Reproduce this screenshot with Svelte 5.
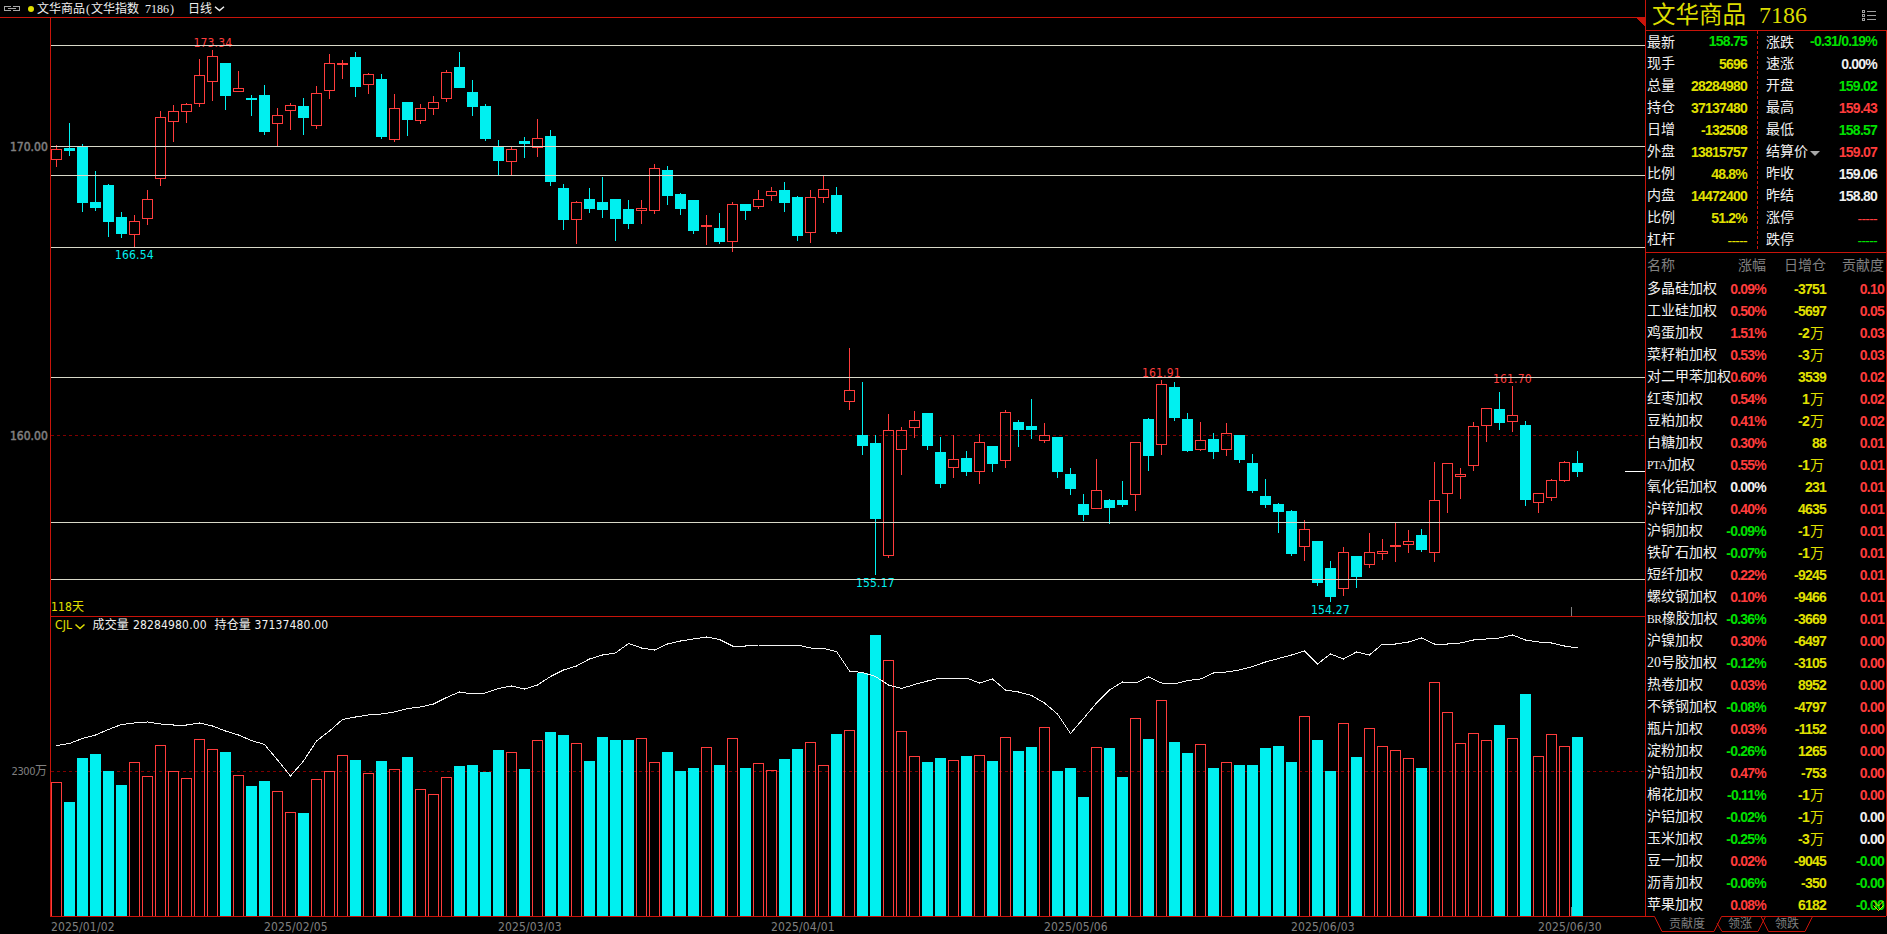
<script>
  const STEP = 13;
  const BAR = 11;
  const LEFT = 51;
  const BASE = 916;

  // direction, high, body top, body bottom, low, volume top, open interest
  const rows = `
    u 145 149 160 167 782 745.5|d 123 148 151 156 802 743.5|d 144 146 203 212 758 738.5|d 171 202 208 211 754 735
    d 184 185 222 237 771 729.5|d 212 217 234 238 785 724.5|u 215 221 235 247 762 723|u 190 199 219 225 776 722
    u 111 117 179 186 745 724|u 105 111 122 142 771 725|u 103 104 112 123 778 725|u 59 75 104 107 739 723
    u 50 56 82 101 749 726|d 63 63 96 110 752 731|u 71 88 92 92 775 735|d 95 98 100 116 786 740.5
    d 85 95 132 135 781 744.5|u 108 115 124 146 791 760|u 103 105 111 130 812 776|d 98 106 118 135 813 761
    u 86 93 126 129 779 741|u 54 63 91 99 771 731|u 60 63 65 79 755 719.5|d 52 57 87 97 760 717
    u 73 74 85 94 773 715|d 74 79 137 139 761 714|u 94 108 140 142 769 712|d 102 102 120 136 757 708.5
    u 104 108 121 124 789 707|u 96 102 109 115 794 704|u 70 72 99 102 777 697.5|d 52 67 88 88 766 692
    d 80 92 107 116 765 694|d 104 106 139 141 772 693|d 140 146 161 175 750 688.5|u 147 149 162 175 752 686
    d 137 141 144 158 769 689|u 119 138 148 157 740 685|d 130 136 182 186 732 676.5|d 184 188 220 230 735 670
    u 201 202 220 244 743 666|d 188 199 209 213 761 659|d 177 202 210 218 737 655|d 199 199 219 241 740 653
    d 200 209 224 229 740 643.5|u 200 208 211 224 738 648|u 164 168 211 214 762 650|d 166 170 196 205 752 644
    d 193 194 209 215 771 641|d 200 200 231 234 768 639|u 215 225 227 245 747 637|d 213 228 242 244 765 639.5
    u 202 204 242 252 738 646|d 204 204 211 220 768 646|u 190 199 207 209 763 645|u 187 191 196 201 770 645
    d 182 190 203 212 759 645|d 196 197 236 241 749 645|u 190 197 233 243 742 648|u 176 189 198 203 765 648.5
    d 187 195 232 234 734 651.5|u 348 390 402 410 730 671|d 382 435 446 455 673 672.5|d 435 443 519 575 635 676.5
    u 414 430 556 558 660 685|u 427 430 450 475 731 688.5|u 411 420 428 438 756 684.5|d 413 413 446 450 762 681
    d 437 452 484 488 758 678|u 435 459 468 478 760 678|d 451 458 472 476 756 678|u 434 442 472 484 755 683
    d 446 446 464 472 761 679|u 410 412 461 468 737 690|d 420 422 430 447 751 692|d 399 426 430 439 747 695.5
    u 423 435 441 443 727 703|d 437 437 472 478 771 714|d 468 474 489 495 768 733.5|d 494 504 515 521 797 718.5
    u 459 490 509 509 747 703|d 499 500 508 524 748 690|d 481 500 505 507 777 682|u 442 442 495 511 718 683
    d 418 419 456 471 739 677|u 380 384 445 455 700 683|d 382 387 418 421 742 684|d 413 419 451 452 753 680.5
    u 422 440 450 451 744 679|d 433 439 452 459 768 673|u 423 433 450 456 762 672|d 435 435 460 463 765 670
    d 454 463 491 493 765 666.5|d 479 496 505 508 748 662|d 503 504 512 533 746 658.5|d 510 511 554 556 762 655
    u 520 529 547 561 716 651|d 541 541 583 586 740 664|d 561 568 597 602 771 654|u 547 552 589 596 723 659
    d 556 556 577 588 757 652|u 533 552 565 568 728 655|u 539 551 554 560 746 644|u 523 545 547 562 750 644
    u 530 541 545 553 758 642|d 529 535 550 552 768 638|u 462 500 553 562 682 644|u 463 463 494 513 712 644
    u 468 474 477 499 743 643|u 422 426 466 471 733 640|u 408 408 426 442 740 639|d 392 409 423 430 725 638
    u 386 415 422 432 738 635|d 421 425 500 506 694 640|u 493 493 503 513 756 642|u 479 480 498 501 734 643
    u 461 462 481 482 746 646|d 451 463 472 477 737 648`;

  const bars = rows
    .trim()
    .split(/[|\n]/)
    .map((row, i) => {
      const [dir, ...nums] = row.trim().split(' ');
      const [high, top, bottom, low, vol, oi] = nums.map(Number);
      return { dir, high, top, bottom, low, vol, oi, x: LEFT + i * STEP };
    });

  const interest = bars.map((b) => `${b.x + 5.5},${b.oi}`).join(' ');

  const levels = [45, 146, 175, 247, 377, 522, 579];

  const marks = [
    { x: 193.5, y: 47, text: '173.34', cls: 'up' },
    { x: 115, y: 259, text: '166.54', cls: 'down' },
    { x: 1142, y: 377, text: '161.91', cls: 'up' },
    { x: 856, y: 587, text: '155.17', cls: 'down' },
    { x: 1493, y: 383, text: '161.70', cls: 'up' },
    { x: 1311, y: 614, text: '154.27', cls: 'down' }
  ];

  const dates = [
    [51, '2025/01/02'],
    [264, '2025/02/05'],
    [498, '2025/03/03'],
    [771, '2025/04/01'],
    [1044, '2025/05/06'],
    [1291, '2025/06/03'],
    [1538, '2025/06/30']
  ];

  const quote = [
    ['最新', '158.75', 'green', '涨跌', '-0.31/0.19%', 'green'],
    ['现手', '5696', 'yellow', '速涨', '0.00%', 'white'],
    ['总量', '28284980', 'yellow', '开盘', '159.02', 'green'],
    ['持仓', '37137480', 'yellow', '最高', '159.43', 'red'],
    ['日增', '-132508', 'yellow', '最低', '158.57', 'green'],
    ['外盘', '13815757', 'yellow', '结算价', '159.07', 'red'],
    ['比例', '48.8%', 'yellow', '昨收', '159.06', 'white'],
    ['内盘', '14472400', 'yellow', '昨结', '158.80', 'white'],
    ['比例', '51.2%', 'yellow', '涨停', '-----', 'red'],
    ['杠杆', '-----', 'yellow', '跌停', '-----', 'green']
  ];

  const contracts = [
    ['多晶硅加权', '0.09%', '-3751', '0.10'],
    ['工业硅加权', '0.50%', '-5697', '0.05'],
    ['鸡蛋加权', '1.51%', '-2万', '0.03'],
    ['菜籽粕加权', '0.53%', '-3万', '0.03'],
    ['对二甲苯加权', '0.60%', '3539', '0.02'],
    ['红枣加权', '0.54%', '1万', '0.02'],
    ['豆粕加权', '0.41%', '-2万', '0.02'],
    ['白糖加权', '0.30%', '88', '0.01'],
    ['PTA加权', '0.55%', '-1万', '0.01'],
    ['氧化铝加权', '0.00%', '231', '0.01'],
    ['沪锌加权', '0.40%', '4635', '0.01'],
    ['沪铜加权', '-0.09%', '-1万', '0.01'],
    ['铁矿石加权', '-0.07%', '-1万', '0.01'],
    ['短纤加权', '0.22%', '-9245', '0.01'],
    ['螺纹钢加权', '0.10%', '-9466', '0.01'],
    ['BR橡胶加权', '-0.36%', '-3669', '0.01'],
    ['沪镍加权', '0.30%', '-6497', '0.00'],
    ['20号胶加权', '-0.12%', '-3105', '0.00'],
    ['热卷加权', '0.03%', '8952', '0.00'],
    ['不锈钢加权', '-0.08%', '-4797', '0.00'],
    ['瓶片加权', '0.03%', '-1152', '0.00'],
    ['淀粉加权', '-0.26%', '1265', '0.00'],
    ['沪铅加权', '0.47%', '-753', '0.00'],
    ['棉花加权', '-0.11%', '-1万', '0.00'],
    ['沪铝加权', '-0.02%', '-1万', '0.00', 'white'],
    ['玉米加权', '-0.25%', '-3万', '0.00', 'white'],
    ['豆一加权', '0.02%', '-9045', '-0.00'],
    ['沥青加权', '-0.06%', '-350', '-0.00'],
    ['苹果加权', '0.08%', '6182', '-0.00']
  ];

  function tone(value) {
    if (value.startsWith('-')) return 'green';
    return value === '0.00%' ? 'white' : 'red';
  }

  // leading latin letters are set smaller than the Chinese name
  const latin = (name) => name.match(/^[A-Z]*/)[0];
</script>

<div class="terminal">
  <main class="left">
    <header class="titlebar">
      <svg class="link" width="16" height="6" viewBox="0 0 16 6" shape-rendering="crispEdges">
        <path d="M7 .5H.5v4H7M9 .5h6.500v4H9M4 2.500h8" fill="none" stroke="#a8a8a8" />
      </svg>
      <span class="dot"></span>
      <span class="name">文华商品<i>(</i>文华指数<i></i>7186<i>)</i></span>
      <span class="period">日线</span>
      <svg class="chev" width="11" height="6" viewBox="0 0 11 6">
        <path d="M1 .8 5.500 4.600 10 .8" fill="none" stroke="#f0f0f0" stroke-width="1.500" />
      </svg>
    </header>

    <svg class="chart" width="1645" height="917" viewBox="0 17 1645 917" shape-rendering="crispEdges">
      <path class="dash" d="M51 435.500H1645M51 771.500H1645" />

      {#each bars as b}
        <g class={b.dir}>
          {#if b.top > b.high}
            <rect class="wick" x={b.x + 5} y={b.high} width="1" height={b.top - b.high} />
          {/if}
          {#if b.low > b.bottom}
            <rect class="wick" x={b.x + 5} y={b.bottom} width="1" height={b.low - b.bottom} />
          {/if}
          <rect class="body" x={b.x + 0.5} y={b.top + 0.5} width={BAR - 1} height={b.bottom - b.top - 1} />
          <rect class="body" x={b.x + 0.5} y={b.vol + 0.5} width={BAR - 1} height={BASE - b.vol} />
        </g>
      {/each}

      {#each marks as m}
        <text class="mark {m.cls}" x={m.x} y={m.y}>{m.text}</text>
      {/each}

      {#each levels as y}
        <rect class="level" x="50" {y} width="1595" height="1" />
      {/each}
      <rect x="1625" y="471" width="20" height="1" fill="#fff" />

      <polyline class="interest" points={interest} />

      <path class="frame" d="M0 17.500H1645M50.500 17V917M50 616.500H1645M50 916.500H1645" />
      <path d="M1635 17H1645V27Z" fill="#c8140a" />
      <path d="M1571.500 607V616M1571.500 907V916" stroke="#808080" />

      <text class="axis strong" x="10" y="151">170.00</text>
      <text class="axis strong" x="10" y="440">160.00</text>
      <text class="axis wide" x="11.500" y="775">2300<tspan class="unit">万</tspan></text>

      <text class="yellow" x="51" y="611">118天</text>
      <text class="yellow" x="55" y="629">CJL</text>
      <path d="M75.500 624.500 80 628.500 84.500 624.500" fill="none" stroke="#e0e000" stroke-width="1.500" shape-rendering="auto" />
      <text class="white" x="92.500" y="629">成交量</text>
      <text class="white" x="133" y="629">28284980.00</text>
      <text class="white" x="214.500" y="629">持仓量</text>
      <text class="white" x="254.500" y="629">37137480.00</text>

      {#each dates as [x, text]}
        <text class="axis" {x} y="931">{text}</text>
      {/each}
    </svg>
  </main>

  <aside class="side">
    <div class="symbol">
      <span>文华商品</span>
      <span class="code">7186</span>
      <svg width="15" height="12" viewBox="0 0 15 12" shape-rendering="crispEdges">
        <path d="M.5 .5h2v2h-2zM.5 4.500h2v2h-2zM.5 8.500h2v2h-2zM5 1.500h9M5 5.500h9M5 9.500h9" fill="none" stroke="#a0a0a0" />
      </svg>
    </div>

    <div class="quote">
      {#each quote as [la, va, ca, lb, vb, cb]}
        <div class="qrow">
          <span class="label">{la}</span>
          <b class={ca} class:none={va === '-----'}>{va}</b>
          <span class="label second">
            {lb}{#if lb === '结算价'}<i class="caret"></i>{/if}
          </span>
          <b class={cb} class:none={vb === '-----'}>{vb}</b>
        </div>
      {/each}
    </div>

    <div class="list">
      <div class="lrow head">
        <span>名称</span><span>涨幅</span><span>日增仓</span><span>贡献度</span>
      </div>
      {#each contracts as [name, pct, change, share, color]}
        <div class="lrow">
          <span class="cname">{#if latin(name)}<small>{latin(name)}</small>{/if}{name.slice(latin(name).length)}</span>
          <b class={tone(pct)}>{pct}</b>
          <b class="yellow" class:wan={change.endsWith('万')}>{change.replace('万', '')}{#if change.endsWith('万')}<em>万</em>{/if}</b>
          <b class={color ?? tone(share)}>{share}</b>
        </div>
      {/each}
      <svg class="more" width="11" height="12" viewBox="0 0 11 12">
        <path d="M.5 1 5.500 6 10.500 1M.5 5.500 5.500 10.500 10.500 5.500" fill="none" stroke="#e0e000" />
      </svg>
    </div>

    <footer class="tabs">
      <svg width="241" height="18" viewBox="0 0 241 18">
        <path d="M0 .5H9.500L17 15.500H69L76.500 .5H241M72 7 77 15.500H113L120.500 .5M116 .5 123.500 15.500H160L167.500 .5" fill="none" stroke="#c8140a" />
      </svg>
      <div class="tabnames">
        <span>贡献度</span><span>领涨</span><span>领跌</span>
      </div>
    </footer>
  </aside>
</div>

<style>
  :global(body) {
    background: #000;
    overflow: hidden;
  }

  .terminal {
    display: grid;
    grid-template-columns: 1645px 242px;
    width: 1887px;
    height: 934px;
    background: #000;
    color: #f0f0f0;
    font-family: 'Liberation Serif', 'Noto Sans CJK SC', serif;
    font-size: 12px;
    overflow: hidden;
  }

  .titlebar {
    display: flex;
    align-items: center;
    height: 17px;
    padding-left: 4px;
    line-height: 16px;
    white-space: nowrap;
  }
  .link {
    margin-right: 8px;
  }
  .dot {
    width: 6px;
    height: 6px;
    margin-right: 3px;
    border-radius: 50%;
    background: #e0e000;
  }
  .name {
    width: 151px;
  }
  .name i {
    display: inline-block;
    width: 6px;
    font-style: normal;
    text-align: center;
  }
  .period {
    margin-right: 2px;
  }

  .chart {
    display: block;
  }
  .chart text {
    font-family: 'DejaVu Sans Condensed', 'Noto Sans', 'Noto Sans CJK SC', sans-serif;
    font-size: 12px;
    font-stretch: condensed;
    letter-spacing: 0.15px;
  }
  .chart .axis {
    fill: #808080;
  }
  .chart .strong {
    stroke: #808080;
    stroke-width: 0.5;
    letter-spacing: 0;
  }
  .chart .wide {
    font-size: 11px;
    letter-spacing: -0.4px;
  }
  .chart .unit {
    font-size: 12px;
  }
  .chart .yellow {
    fill: #e0e000;
  }
  .chart .white {
    fill: #f0f0f0;
  }
  .dash {
    stroke: #800000;
    stroke-dasharray: 3 3;
  }
  .frame {
    stroke: #c8140a;
  }
  .level {
    fill: #d8d8c8;
  }
  .interest {
    fill: none;
    stroke: #f4f4f4;
  }
  .u .body {
    fill: none;
    stroke: #ff3c3c;
  }
  .d .body {
    fill: #00f0f0;
    stroke: #00f0f0;
  }
  .u .wick,
  .mark.up {
    fill: #ff3c3c;
  }
  .d .wick,
  .mark.down {
    fill: #00f0f0;
  }

  .side {
    display: flex;
    flex-direction: column;
    font-size: 14px;
  }
  .symbol {
    display: flex;
    align-items: center;
    box-sizing: border-box;
    height: 31px;
    padding: 1px 10px 0 6px;
    border-left: 1px solid #c8140a;
    border-bottom: 1px solid #c8140a;
    color: #dcdc00;
    font-size: 23.5px;
    line-height: 29px;
    white-space: nowrap;
  }
  .code {
    margin-left: 13px;
    font-size: 24px;
  }
  .symbol svg {
    margin-left: auto;
  }

  .quote,
  .list {
    position: relative;
    box-sizing: border-box;
    border-left: 1px solid #c8140a;
    border-right: 1px solid #c8140a;
  }
  .quote {
    height: 222px;
    border-bottom: 1px solid #c8140a;
    background: repeating-linear-gradient(#c8140a 0 3px, transparent 3px 5px) 111px 0 / 1px 218px no-repeat;
  }
  .qrow {
    display: grid;
    grid-template-columns: 40px 60px 59px 1fr;
    height: 22px;
    padding: 0 9px 0 1px;
    line-height: 23px;
    white-space: nowrap;
  }
  .qrow:first-child {
    height: 21px;
  }
  .second {
    padding-left: 19px;
  }
  b {
    position: relative;
    top: 1px;
    font-family: 'Liberation Sans', Arial, sans-serif;
    font-size: 14px;
    letter-spacing: -0.78px;
    text-align: right;
  }
  .qrow b {
    justify-self: end;
  }
  .qrow:first-child b {
    top: -1px;
  }
  .none {
    top: 2px;
    font-weight: 400;
  }
  .caret {
    display: inline-block;
    margin: 0 0 0 2px;
    border: 5px solid transparent;
    border-top-color: #a8a8a8;
    border-bottom: 0;
  }

  .list {
    height: 663px;
  }
  .lrow {
    display: grid;
    grid-template-columns: 67px 52px 60px 58px;
    height: 22px;
    padding-left: 1px;
    line-height: 23px;
    white-space: nowrap;
  }
  .lrow > :not(:first-child) {
    justify-self: end;
  }
  .head {
    height: 24px;
    line-height: 26px;
    color: #808080;
  }
  .cname small {
    font-size: 11.5px;
    letter-spacing: -0.3px;
  }
  .wan {
    right: 2px;
  }
  .wan em {
    margin-left: 1px;
    font: 400 14px 'Noto Sans CJK SC', sans-serif;
    line-height: 1;
    letter-spacing: 0;
  }
  .more {
    position: absolute;
    right: 2px;
    bottom: 4px;
  }

  .tabs {
    position: relative;
    height: 18px;
    font-size: 12px;
    line-height: 15px;
    color: #808080;
  }
  .tabs svg {
    display: block;
  }
  .tabnames {
    position: absolute;
    top: 1px;
    left: 24px;
    display: flex;
    gap: 23px;
  }

  .red {
    color: #ff3c3c;
  }
  .green {
    color: #00e000;
  }
  .yellow {
    color: #e0e000;
  }
  .white {
    color: #f0f0f0;
  }
</style>
